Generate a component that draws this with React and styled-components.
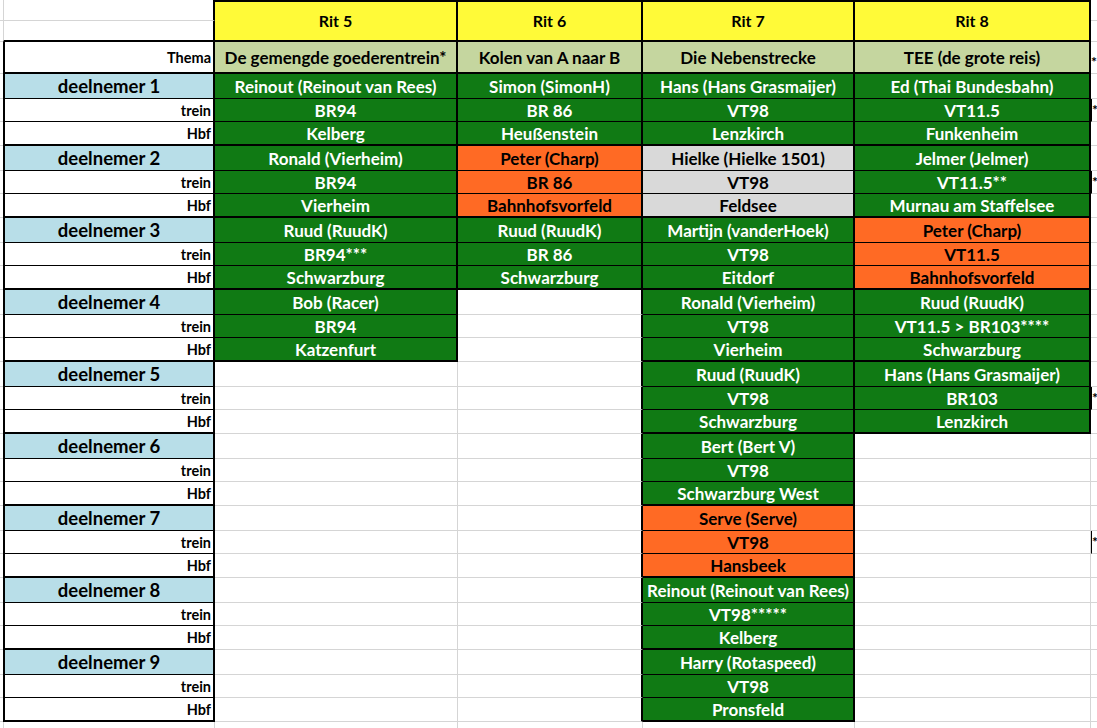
import React from 'react'
import styled, { createGlobalStyle } from 'styled-components'

const GlobalStyle = createGlobalStyle`
  html, body {
    margin: 0;
    padding: 0;
    background: #fff;
    overflow: hidden;
  }
  body {
    font-family: Lato, 'Liberation Sans', sans-serif;
  }
`

const lines = {
  thick: '2px solid #000',
  thin: '1px solid #000',
  grid: '1px solid #d5d5d5',
  none: '0',
}

const fills = {
  green: { bg: '#107a14', fg: '#fff' },
  orange: { bg: '#ff6a24', fg: '#000' },
  gray: { bg: '#d9d9d9', fg: '#000' },
}

const rits = [
  {
    title: 'Rit 5',
    theme: 'De gemengde goederentrein*',
    entries: [
      ['Reinout (Reinout van Rees)', 'BR94', 'Kelberg', 'green'],
      ['Ronald (Vierheim)', 'BR94', 'Vierheim', 'green'],
      ['Ruud (RuudK)', 'BR94***', 'Schwarzburg', 'green'],
      ['Bob (Racer)', 'BR94', 'Katzenfurt', 'green'],
    ],
  },
  {
    title: 'Rit 6',
    theme: 'Kolen van A naar B',
    entries: [
      ['Simon (SimonH)', 'BR 86', 'Heußenstein', 'green'],
      ['Peter (Charp)', 'BR 86', 'Bahnhofsvorfeld', 'orange'],
      ['Ruud (RuudK)', 'BR 86', 'Schwarzburg', 'green'],
    ],
  },
  {
    title: 'Rit 7',
    theme: 'Die Nebenstrecke',
    entries: [
      ['Hans (Hans Grasmaijer)', 'VT98', 'Lenzkirch', 'green'],
      ['Hielke (Hielke 1501)', 'VT98', 'Feldsee', 'gray'],
      ['Martijn (vanderHoek)', 'VT98', 'Eitdorf', 'green'],
      ['Ronald (Vierheim)', 'VT98', 'Vierheim', 'green'],
      ['Ruud (RuudK)', 'VT98', 'Schwarzburg', 'green'],
      ['Bert (Bert V)', 'VT98', 'Schwarzburg West', 'green'],
      ['Serve (Serve)', 'VT98', 'Hansbeek', 'orange'],
      ['Reinout (Reinout van Rees)', 'VT98*****', 'Kelberg', 'green'],
      ['Harry (Rotaspeed)', 'VT98', 'Pronsfeld', 'green'],
    ],
  },
  {
    title: 'Rit 8',
    theme: 'TEE (de grote reis)',
    entries: [
      ['Ed (Thai Bundesbahn)', 'VT11.5', 'Funkenheim', 'green'],
      ['Jelmer (Jelmer)', 'VT11.5**', 'Murnau am Staffelsee', 'green'],
      ['Peter (Charp)', 'VT11.5', 'Bahnhofsvorfeld', 'orange'],
      ['Ruud (RuudK)', 'VT11.5 > BR103****', 'Schwarzburg', 'green'],
      ['Hans (Hans Grasmaijer)', 'BR103', 'Lenzkirch', 'green'],
    ],
  },
]

const subLabels = ['', 'trein', 'Hbf']
// rows where a footnote in the next column peeks in at the right edge
const noteRows = ['0-1', '1-1', '4-1', '6-1']

const Sheet = styled.div`
  display: grid;
  grid-template-columns: 3px 212px 243px 185px 212px 236px 6px;
  grid-template-rows: 21px 21px 32px repeat(9, 25px 23px 24px) 30px;
  width: 1097px;
  height: 728px;
  overflow: hidden;
`

const Cell = styled.div`
  box-sizing: border-box;
  display: flex;
  align-items: center;
  justify-content: center;
  min-width: 0;
  overflow: hidden;
  white-space: nowrap;
  font-weight: 700;
  font-size: 16px;
  color: #000;
  background: #fff;
  grid-row: span ${p => p.$span || 1};
  border-top: ${p => lines[p.$t || 'none']};
  border-right: ${p => lines[p.$r || 'none']};
  border-bottom: ${p => lines[p.$b || 'grid']};
  border-left: ${p => lines[p.$l || 'none']};
`

const RitHead = styled(Cell)`
  background: #fffa38;
  font-size: 16px;
  padding-bottom: 1px;
`

const Theme = styled(Cell)`
  background: #c5d69f;
  font-size: 17px;
`

const Label = styled(Cell)`
  justify-content: flex-end;
  padding-right: 2px;
  font-size: 14.5px;
`

const Participant = styled(Cell)`
  background: #b8dee8;
  font-size: 18.5px;
`

const Entry = styled(Cell)`
  background: ${p => fills[p.$tone].bg};
  color: ${p => fills[p.$tone].fg};
  font-size: 17px;
`

const Note = styled(Cell)`
  justify-content: flex-start;
  align-items: flex-end;
  padding: 0 0 4px 0;
  font-size: 14px;
  line-height: 1;
`

export default function App() {
  const cells = []
  const push = (el) => cells.push(React.cloneElement(el, { key: cells.length }))

  // header: two sheet rows, the yellow Rit cells merged over both
  push(<Cell />)
  push(<Cell $l="grid" $r="thick" />)
  rits.forEach(rit =>
    push(
      <RitHead $span={2} $t="thick" $b="thick" $r="thick">
        {rit.title}
      </RitHead>
    )
  )
  push(<Cell />)
  push(<Cell />)
  push(<Cell $l="grid" $r="thick" $b="thick" />)
  push(<Cell />)

  // thema row
  push(<Cell />)
  push(
    <Label $l="thick" $r="thick" $b="thick">
      Thema
    </Label>
  )
  rits.forEach(rit =>
    push(
      <Theme $r="thick" $b="thick">
        {rit.theme}
      </Theme>
    )
  )
  push(<Note>*</Note>)

  const filled = (c, k) => c < rits.length && !!rits[c].entries[k]

  for (let k = 0; k < 9; k++) {
    for (let j = 0; j < 3; j++) {
      const edge = j === 2 ? 'thick' : 'thin'
      push(<Cell />)
      if (j === 0) {
        push(
          <Participant $l="thick" $r="thick" $b={edge}>
            deelnemer {k + 1}
          </Participant>
        )
      } else {
        push(
          <Label $l="thick" $r="thick" $b={edge}>
            {subLabels[j]}
          </Label>
        )
      }
      rits.forEach((rit, c) => {
        const entry = rit.entries[k]
        if (entry) {
          push(
            <Entry $tone={entry[3]} $r="thick" $b={edge}>
              {entry[j]}
            </Entry>
          )
        } else {
          push(<Cell $r={filled(c + 1, k) ? 'thick' : 'grid'} />)
        }
      })
      const note = noteRows.includes(`${k}-${j}`)
      push(note ? <Note $l="thin">*</Note> : <Cell />)
    }
  }

  // trailing sheet row below the table
  push(<Cell />)
  push(<Cell $l="grid" $r="grid" />)
  rits.forEach(() => push(<Cell $r="grid" />))
  push(<Cell />)

  return (
    <>
      <GlobalStyle />
      <Sheet>{cells}</Sheet>
    </>
  )
}
